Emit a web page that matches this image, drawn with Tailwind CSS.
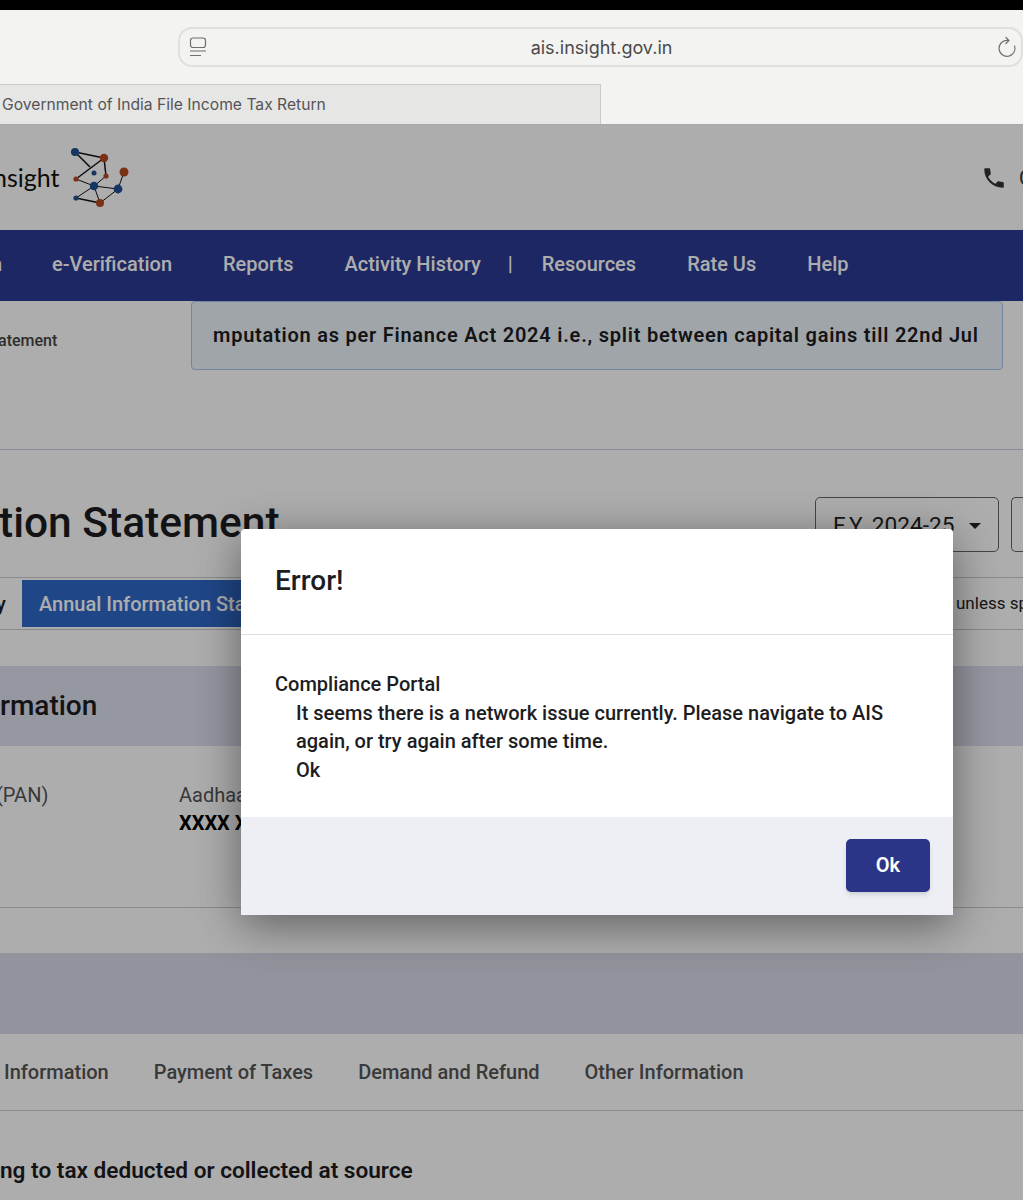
<!DOCTYPE html>
<html lang="en">
<head>
  <meta charset="UTF-8" />
  <title>ais.insight.gov.in</title>
  <script src="https://cdn.jsdelivr.net/npm/@tailwindcss/browser@4"></script>
</head>
<body class="bg-white font-['Roboto',sans-serif] text-[#1d1d1f]">
  <div class="relative h-[1200px] w-[1023px] overflow-hidden">
    <!-- browser chrome -->
    <div class="h-[10px] bg-black"></div>
    <div class="h-[74px] bg-[#f3f3f2] pl-[178px] pt-[17px]">
      <div class="flex h-[40px] items-center rounded-l-[14px] rounded-r-[14px] border-2 border-[#dfdfdd] bg-[#f3f3f2] pl-[8px] pr-[3px]">
        <svg class="h-[22px] w-[20px]" viewBox="0 0 20 22" fill="none" stroke="#6f6f6f" stroke-width="1.2">
          <rect x="2.5" y="2" width="15" height="9.5" rx="2.5" />
          <path d="M2 15h16M2 19.5h11" />
        </svg>
        <span class="flex-1 pt-[1px] pr-[3px] text-center font-['Inter',sans-serif] text-[18px] text-[#4a4a4a]">ais.insight.gov.in</span>
        <svg class="h-[22px] w-[20px]" viewBox="0 0 20 22" fill="none" stroke="#6f6f6f" stroke-width="1.1">
          <path d="M16.5 9.5A8 8 0 1 1 10.5 4.5M7.5 1l3.5 3.5L7.5 8" />
        </svg>
      </div>
    </div>
    <div class="flex h-[41px] border-b border-[#a9a9a9] bg-[#f3f3f2]">
      <div class="flex w-[601px] items-center border-t border-r border-[#c9c9c8] bg-[#e6e6e5] pt-[1px] pl-[2px] font-['Inter',sans-serif] text-[15.66px] text-[#555]">Government of India File Income Tax Return</div>
    </div>

    <!-- page behind the dialog -->
    <div class="relative h-[1075px]">
      <div class="flex h-[105px] items-center justify-between">
        <div class="flex items-center">
          <span class="-ml-[7px] pt-[1px] font-['Lato',sans-serif] text-[25px] text-[#111]">nsight</span>
          <svg class="mt-[1px] ml-[11px] h-[60px] w-[58px]" viewBox="0 0 58 60">
            <g stroke="#111" fill="none">
              <path stroke-width="1.5" d="M4 4 33 10M4 4l15 15M33 10 5 31M33 10l2 18M5 50l24 5" />
              <path stroke-width="1" d="M35 28 23 38M5 31l18 7M23 38l24 3M23 38 5 50M23 38l6 17M29 55l18-14M47 41l6-17" />
            </g>
            <g fill="#1f4f93">
              <circle cx="4" cy="4" r="4" /><circle cx="23" cy="25" r="2.5" /><circle cx="23" cy="38" r="4.2" /><circle cx="47" cy="41" r="4.4" /><circle cx="5" cy="50" r="2.6" />
            </g>
            <g fill="#b5491f">
              <circle cx="33" cy="10" r="4.2" /><circle cx="35" cy="28" r="2.6" /><circle cx="5" cy="31" r="2.6" /><circle cx="53" cy="24" r="4.5" /><circle cx="29" cy="55" r="4" />
            </g>
          </svg>
        </div>
        <div class="flex items-center gap-[12px]">
          <svg class="h-[26px] w-[26px]" viewBox="0 0 24 24" fill="#333"><path d="M6.6 10.8c1.4 2.8 3.8 5.1 6.6 6.6l2.2-2.2c.3-.3.7-.4 1-.2 1.1.4 2.3.6 3.6.6.6 0 1 .4 1 1V20c0 .6-.4 1-1 1C10.6 21 3 13.4 3 4c0-.6.4-1 1-1h3.5c.6 0 1 .4 1 1 0 1.3.2 2.5.6 3.6.1.3 0 .7-.2 1z" /></svg>
          <span class="w-[4px] overflow-hidden text-[20px] text-[#333]">C</span>
        </div>
      </div>

      <nav class="flex h-[71px] items-center bg-[#2a3a92] pb-[3px] text-[20px] font-medium text-white">
        <span class="w-[2px] overflow-hidden"><span class="-ml-[9px] inline-block">n</span></span>
        <span class="ml-[50px]">e-Verification</span>
        <span class="ml-[51px]">Reports</span>
        <span class="ml-[51px]">Activity History</span>
        <span class="ml-[27px]">|</span>
        <span class="ml-[29px]">Resources</span>
        <span class="ml-[51px]">Rate Us</span>
        <span class="ml-[51px]">Help</span>
      </nav>

      <div class="flex h-[149px] items-start border-b border-[#c6cde0]">
        <span class="mt-[28px] -ml-[2px] w-[193px] text-[16px] font-medium text-[#444]">atement</span>
        <div class="flex h-[69px] w-[812px] items-center overflow-hidden whitespace-nowrap rounded-[4px] border border-[#a9c6ee] bg-[#ebf4f8] pb-[2px] pl-[21px] text-[20px] font-semibold tracking-[0.76px] text-[#1d1d1f]">mputation as per Finance Act 2024 i.e., split between capital gains till 22nd Jul</div>
      </div>

      <div class="flex h-[127px] items-start justify-between pt-[47px]">
        <h1 class="-ml-[1px] text-[42.5px] leading-[52px] font-medium">tion Statement</h1>
        <div class="flex gap-[12px]">
          <div class="flex h-[55px] w-[184px] items-center gap-[14px] rounded-[5px] border border-[#666] pt-[3px] pl-[17px] text-[22.7px] text-[#222]">
            <span>F.Y. 2024-25</span>
            <span class="h-0 w-0 border-x-[6px] border-t-[6px] border-x-transparent border-t-[#222]"></span>
          </div>
          <div class="h-[55px] w-[12px] rounded-l-[5px] border-y border-l border-[#666]"></div>
        </div>
      </div>

      <div class="flex h-[53px] items-center justify-between border-y border-[#ccc]">
        <div class="flex items-center">
          <span class="-ml-[4px] w-[26px] text-[20px] font-medium">y</span>
          <span class="flex h-[47px] w-[300px] items-center whitespace-nowrap bg-[#2f68c8] pl-[17px] text-[20px] font-medium text-white">Annual Information Statement</span>
        </div>
        <span class="w-[67px] overflow-hidden whitespace-nowrap text-[17px] text-[#222]">unless specified</span>
      </div>

      <div class="mt-[36px] flex h-[80px] items-center bg-[#dcdfed] text-[28px] font-medium">rmation</div>

      <div class="flex h-[162px] border-b border-[#ccc] pt-[35px] text-[20px] leading-[28px]">
        <span class="-ml-[4px] w-[183px] text-[#555]">(PAN)</span>
        <div>
          <div class="text-[#555]">Aadhaar</div>
          <div class="font-bold text-black">XXXX XXXX</div>
        </div>
      </div>

      <div class="mt-[45px] h-[81px] bg-[#d8dbe8]"></div>

      <div class="flex h-[77px] items-center gap-[45px] border-b border-[#ccc] pl-[4px] text-[20px] font-medium text-[#555]">
        <span>Information</span>
        <span>Payment of Taxes</span>
        <span>Demand and Refund</span>
        <span>Other Information</span>
      </div>

      <div class="pt-[45px] text-[22.6px] leading-[30px] font-semibold">ng to tax deducted or collected at source</div>

      <div class="absolute inset-0 bg-black/[0.32]"></div>
    </div>

    <!-- error dialog -->
    <div class="absolute top-[529px] left-[241px] w-[712px] rounded-t-[4px] bg-white shadow-[0_10px_45px_rgba(0,0,0,0.45)]">
      <div class="flex h-[106px] items-center border-b border-[#dedede] pb-[2px] pl-[34px] text-[28px] font-medium text-[#1d1d1f]">Error!</div>
      <div class="h-[182px] pt-[35px] pl-[34px] pr-[60px] text-[20px] leading-[28.5px] font-medium text-[#1d1d1f]">
        <p>Compliance Portal</p>
        <div class="pl-[21px]">
          <p>It seems there is a network issue currently. Please navigate to AIS again, or try again after some time.</p>
          <p>Ok</p>
        </div>
      </div>
      <div class="flex h-[98px] items-center justify-end bg-[#eeeff5] pr-[23px] pb-[1px]">
        <button class="h-[53px] w-[84px] rounded-[5px] bg-[#2a3587] pb-[1px] text-[20px] font-semibold text-white shadow-md">Ok</button>
      </div>
    </div>
  </div>
</body>
</html>
